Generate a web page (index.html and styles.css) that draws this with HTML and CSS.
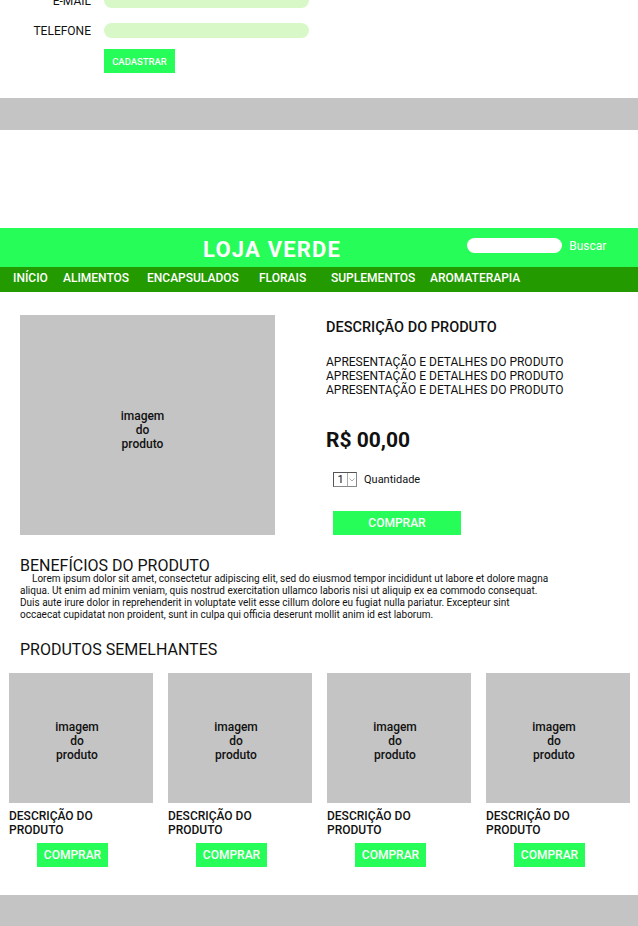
FILE: index.html
```html
<!DOCTYPE html>
<html lang="pt-BR">
<head>
<meta charset="utf-8">
<title>Loja Verde</title>
<link rel="stylesheet" href="styles.css">
</head>
<body>
<section class="signup">
  <div class="form-row">
    <label class="form-label">E-MAIL</label>
    <span class="form-input"></span>
  </div>
  <div class="form-row">
    <label class="form-label">TELEFONE</label>
    <span class="form-input"></span>
  </div>
  <div class="form-row">
    <span class="form-label"></span>
    <button class="btn btn-small">CADASTRAR</button>
  </div>
</section>
<div class="band"></div>
<div class="spacer"></div>

<header class="top">
  <h1 class="brand">LOJA VERDE</h1>
  <span class="search"></span>
  <span class="search-label">Buscar</span>
</header>
<nav class="menu">
  <a>INÍCIO</a>
  <a>ALIMENTOS</a>
  <a>ENCAPSULADOS</a>
  <a>FLORAIS</a>
  <a>SUPLEMENTOS</a>
  <a>AROMATERAPIA</a>
</nav>

<main class="content">
  <section class="product">
    <div class="photo photo-large">imagem<br>do<br>produto</div>
    <div class="info">
      <h2 class="info-title">DESCRIÇÃO DO PRODUTO</h2>
      <p class="info-details">APRESENTAÇÃO E DETALHES DO PRODUTO<br>APRESENTAÇÃO E DETALHES DO PRODUTO<br>APRESENTAÇÃO E DETALHES DO PRODUTO</p>
      <div class="price">R$ 00,00</div>
      <div class="qty">
        <span class="qty-box"><span class="qty-num">1</span><span class="qty-arrow"><svg width="6" height="4" viewBox="0 0 6 4"><path d="M0.5 0.5 L3 3 L5.5 0.5" fill="none" stroke="#999" stroke-width="0.8"/></svg></span></span>
        <span class="qty-label">Quantidade</span>
      </div>
      <button class="btn btn-buy">COMPRAR</button>
    </div>
  </section>

  <section class="benefits">
    <h3 class="section-title">BENEFÍCIOS DO PRODUTO</h3>
    <p class="benefits-text">Lorem ipsum dolor sit amet, consectetur adipiscing elit, sed do eiusmod tempor incididunt ut labore et dolore magna<br>aliqua. Ut enim ad minim veniam, quis nostrud exercitation ullamco laboris nisi ut aliquip ex ea commodo consequat.<br>Duis aute irure dolor in reprehenderit in voluptate velit esse cillum dolore eu fugiat nulla pariatur. Excepteur sint<br>occaecat cupidatat non proident, sunt in culpa qui officia deserunt mollit anim id est laborum.</p>
  </section>

  <section class="related">
    <h3 class="section-title related-title">PRODUTOS SEMELHANTES</h3>
    <div class="cards">
      <div class="card">
        <div class="photo photo-card">imagem<br>do<br>produto</div>
        <div class="card-desc">DESCRIÇÃO DO<br>PRODUTO</div>
        <button class="btn btn-card">COMPRAR</button>
      </div>
      <div class="card">
        <div class="photo photo-card">imagem<br>do<br>produto</div>
        <div class="card-desc">DESCRIÇÃO DO<br>PRODUTO</div>
        <button class="btn btn-card">COMPRAR</button>
      </div>
      <div class="card">
        <div class="photo photo-card">imagem<br>do<br>produto</div>
        <div class="card-desc">DESCRIÇÃO DO<br>PRODUTO</div>
        <button class="btn btn-card">COMPRAR</button>
      </div>
      <div class="card">
        <div class="photo photo-card">imagem<br>do<br>produto</div>
        <div class="card-desc">DESCRIÇÃO DO<br>PRODUTO</div>
        <button class="btn btn-card">COMPRAR</button>
      </div>
    </div>
  </section>
</main>
<div class="band band-bottom"></div>
</body>
</html>
```

FILE: styles.css
```css
* { box-sizing: border-box; }
html, body { margin: 0; padding: 0; }
body {
  font-family: Roboto, "Liberation Sans", sans-serif;
  color: #111;
  background: #fff;
  width: 638px;
  height: 926px;
  overflow: hidden;
}

/* signup form */
.signup {
  margin-top: -7px;
  display: flex;
  flex-direction: column;
  gap: 15px;
}
.form-row {
  display: flex;
  align-items: center;
  gap: 13px;
  height: 15px;
}
.form-label {
  width: 91px;
  text-align: right;
  font-size: 12px;
  color: #111;
}
.form-input {
  width: 205px;
  height: 15px;
  border-radius: 8px;
  background: #d8f9c7;
}
.form-row:last-child {
  height: 24px;
  margin-top: -4px;
}

.btn {
  border: 0;
  background: #27fd59;
  color: #fff;
  font-family: Roboto, "Liberation Sans", sans-serif;
  font-weight: 500;
  padding: 0;
  display: flex;
  align-items: center;
  justify-content: center;
}
.btn-small {
  width: 71px;
  height: 24px;
  font-size: 9.5px;
}

.band {
  height: 32px;
  background: #c4c4c4;
  margin-top: 25px;
}
.spacer { height: 98px; }

/* header */
.top {
  height: 39px;
  background: #27fd59;
  display: flex;
  align-items: center;
}
.brand {
  margin: 0 0 0 203px;
  font-size: 22px;
  font-weight: 700;
  color: #fff;
  letter-spacing: 1.2px;
  line-height: 1;
  padding-top: 5px;
}
.search {
  margin-left: 126px;
  width: 95px;
  height: 15px;
  border-radius: 8px;
  background: #fff;
  margin-top: -4px;
}
.search-label {
  margin-left: 7px;
  color: #fff;
  font-size: 12px;
  margin-top: -4px;
}

.menu {
  height: 25px;
  background: #229a00;
  display: flex;
  align-items: center;
  padding-left: 13px;
  padding-bottom: 3px;
}
.menu a {
  color: #fff;
  font-size: 12px;
  font-weight: 500;
  white-space: nowrap;
}
.menu a:nth-child(1) { width: 50px; }
.menu a:nth-child(2) { width: 84px; }
.menu a:nth-child(3) { width: 112px; }
.menu a:nth-child(4) { width: 72px; }
.menu a:nth-child(5) { width: 99px; }

/* product */
.content { padding-top: 23px; }
.product {
  display: flex;
  padding-left: 20px;
}
.photo {
  background: #c4c4c4;
  display: flex;
  align-items: center;
  justify-content: center;
  text-align: center;
  font-size: 12px;
  font-weight: 500;
  line-height: 14px;
  color: #111;
}
.photo-large {
  width: 255px;
  height: 220px;
  padding-top: 10px;
  padding-right: 10px;
}
.info {
  margin-left: 51px;
  padding-top: 4px;
}
.info-title {
  margin: 0;
  font-size: 14.5px;
  font-weight: 500;
  line-height: 17px;
}
.info-details {
  margin: 19px 0 0;
  font-size: 12px;
  line-height: 14px;
}
.price {
  margin-top: 31px;
  font-size: 21px;
  font-weight: 700;
  line-height: 25px;
}
.qty {
  margin-top: 19px;
  margin-left: 7px;
  display: flex;
  align-items: center;
  gap: 7px;
}
.qty-box {
  display: flex;
  width: 24px;
  height: 15px;
  border: 1px solid #555;
  border-bottom-color: #888;
  border-right-color: #888;
}
.qty-num {
  width: 14px;
  text-align: center;
  font-size: 11px;
  line-height: 13px;
  border-right: 1px solid #aaa;
}
.qty-arrow {
  flex: 1;
  display: flex;
  align-items: center;
  justify-content: center;
}
.qty-label { font-size: 11px; }
.btn-buy {
  margin-top: 24px;
  margin-left: 7px;
  width: 128px;
  height: 24px;
  font-size: 12px;
}

/* benefits */
.benefits { padding-left: 20px; margin-top: 23px; }
.section-title {
  margin: 0;
  font-size: 16px;
  font-weight: 400;
  line-height: 15px;
}
.benefits-text {
  margin: 0;
  font-size: 10px;
  line-height: 12px;
  text-indent: 12px;
}

.related { margin-top: 21px; }
.related-title { padding-left: 20px; }
.cards {
  display: grid;
  grid-template-columns: repeat(4, 144px);
  column-gap: 15px;
  padding-left: 9px;
  margin-top: 16px;
}
.photo-card {
  height: 130px;
  padding-top: 6px;
  padding-right: 8px;
}
.card-desc {
  margin-top: 6px;
  font-size: 12px;
  font-weight: 500;
  line-height: 14px;
}
.btn-card {
  margin-top: 6px;
  margin-left: 28px;
  width: 71px;
  height: 24px;
  font-size: 12px;
}

.band-bottom { margin-top: 28px; height: 31px; }
```
